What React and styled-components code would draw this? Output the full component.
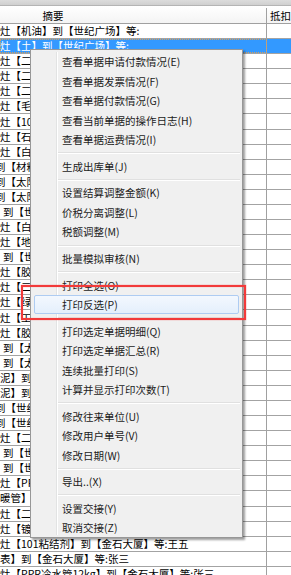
import React from 'react';
import styled, { createGlobalStyle, css } from 'styled-components';

const GlobalStyle = createGlobalStyle`
  html, body { margin: 0; padding: 0; background: #ffffff; }
  body { font-family: "Noto Sans CJK SC", "Noto Sans", sans-serif; }
`;

const Screen = styled.div`
  position: relative;
  width: 291px;
  height: 575px;
  overflow: hidden;
  background: #ffffff;
`;

const TopStrip = styled.div`
  height: 6px;
  box-sizing: border-box;
  background: linear-gradient(#dcdcdc, #cfcfcf);
  border-bottom: 1px solid #b4b4b4;
`;

const Table = styled.div`
  font-family: "Noto Sans CJK SC", sans-serif;
  font-size: 10.5px;
  color: #000000;
`;

const HeaderRow = styled.div`
  display: grid;
  grid-template-columns: 267px 1fr;
  height: 18px;
  box-sizing: border-box;
  border-bottom: 1px solid #a0a0a0;
  background: linear-gradient(#ffffff, #f4f4f4);
`;

const HeaderCell = styled.div`
  display: flex;
  align-items: center;
  justify-content: ${p => (p.$center ? 'center' : 'flex-start')};
  padding-left: ${p => (p.$center ? '0' : '3px')};
  padding-right: ${p => (p.$center ? '160px' : '0')};
  border-right: ${p => (p.$divider ? '1px solid #a0a0a0' : 'none')};
  margin-top: 2px;
  white-space: nowrap;
  overflow: hidden;
`;

const Row = styled.div`
  display: grid;
  grid-template-columns: 267px 1fr;
  height: 15.08px;
  box-sizing: border-box;
  border-bottom: 1px solid #a3a3a3;
  background: ${p => (p.$selected ? '#3399ff' : '#ffffff')};
  color: ${p => (p.$selected ? '#ffffff' : '#000000')};
`;

const Cell = styled.div`
  position: relative;
  display: flex;
  align-items: center;
  border-right: ${p => (p.$divider ? '1px solid #a0a0a0' : 'none')};
  white-space: nowrap;
  overflow: hidden;
  line-height: 14px;
  ${p => p.$focus && css`
    outline: 1px dotted #d9a05b;
    outline-offset: -1px;
  `}
`;

const CellText = styled.span`
  margin-left: ${p => p.$shift || 0}px;
`;

const Menu = styled.div`
  position: absolute;
  left: 30px;
  top: 49px;
  width: 213px;
  box-sizing: border-box;
  padding: 2px 2px 0 2px;
  background: #f0f0f0;
  border: 1px solid #979797;
  box-shadow: 2px 2px 2px rgba(0, 0, 0, 0.38);
  font-family: "Noto Sans CJK SC", sans-serif;
  font-size: 10.5px;
  color: #1b1b1b;

  &::before {
    content: '';
    position: absolute;
    top: 2px;
    bottom: 2px;
    left: 25px;
    width: 1px;
    background: #e2e3e3;
    box-shadow: 1px 0 0 #ffffff;
  }
`;

const Item = styled.div`
  position: relative;
  height: 19.46px;
  display: flex;
  align-items: center;
  box-sizing: border-box;
  padding-left: 29px;
  white-space: nowrap;
  ${p => p.$active && css`
    margin: 0 1px;
    padding-left: 27px;
    border: 1px solid #aeccf2;
    border-radius: 2px;
    background: linear-gradient(#f3f8fe, #e4effc);
  `}
`;

const Separator = styled.div`
  position: relative;
  height: 7.2px;
  display: flex;
  align-items: center;
  padding-left: 25px;

  &::after {
    content: '';
    flex: 1;
    height: 1px;
    background: #e0e0e0;
    box-shadow: 0 1px 0 #ffffff;
  }
`;

const Callout = styled.div`
  position: absolute;
  left: 21px;
  top: 285px;
  width: 225px;
  height: 34.5px;
  box-sizing: border-box;
  border: 2px solid #f23a3a;
  box-shadow: 0 0 1px rgba(242, 58, 58, 0.7), inset 0 0 1px rgba(242, 58, 58, 0.7);
  pointer-events: none;
`;

const rows = [
  { t: '灶【机油】到【世纪广场】等:' },
  { t: '灶【土】到【世纪广场】等:', selected: true },
  { t: '灶【二级钢筋】到【世纪广场】等:' },
  { t: '灶【二级钢筋】到【世纪广场】等:' },
  { t: '灶【二级钢筋】到【世纪广场】等:' },
  { t: '灶【毛毡】到【世纪广场】等:' },
  { t: '灶【107胶】到【世纪广场】等:' },
  { t: '灶【石硝】到【世纪广场】等:' },
  { t: '灶【白水泥】到【世纪广场】等:' },
  { t: '到【材料】到【世纪广场】等:', shift: -5 },
  { t: '到【太阳能】到【世纪广场】等:', shift: -5 },
  { t: '到【太阳能】到【世纪广场】等:', shift: -5 },
  { t: ' 到【世纪广场】等:', shift: 3 },
  { t: '灶【白水泥】到【世纪广场】等:' },
  { t: '灶【地暖管】到【世纪广场】等:' },
  { t: ' 到【世纪广场】等:', shift: 3 },
  { t: '灶【胶粘剂】到【世纪广场】等:' },
  { t: '灶【二级钢筋】到【世纪广场】等:' },
  { t: '灶【绿化带】到【世纪广场】等:' },
  { t: '灶【工字钢】到【世纪广场】等:' },
  { t: '灶【胶粘剂】到【世纪广场】等:' },
  { t: ' 到【太阳能】等:', shift: 3 },
  { t: ' 到【太阳能】等:', shift: 3 },
  { t: '泥】到【世纪广场】等:' },
  { t: '泥】到【世纪广场】等:' },
  { t: '到【世纪广场】等:', shift: -5 },
  { t: '到【世纪广场】等:', shift: -5 },
  { t: '灶【二级钢筋】到【世纪广场】等:' },
  { t: ' 到【世纪广场】等:', shift: 3 },
  { t: ' 到【世纪广场】等:', shift: 3 },
  { t: '灶【PPR管】到【世纪广场】等:' },
  { t: '暖管】到【世纪广场】等:' },
  { t: '灶【二级钢筋】到【世纪广场】等:' },
  { t: '灶【镀锌管】到【世纪广场】等:' },
  { t: '灶【101粘结剂】到【金石大厦】等:王五' },
  { t: '表】到【金石大厦】等:张三' },
  { t: '灶【PPR冷水管12kg】到【金石大厦】等:张三' },
];

const menu = [
  '查看单据申请付款情况(E)',
  '查看单据发票情况(F)',
  '查看单据付款情况(G)',
  '查看当前单据的操作日志(H)',
  '查看单据运费情况(I)',
  '-',
  '生成出库单(J)',
  '-',
  '设置结算调整金额(K)',
  '价税分离调整(L)',
  '税额调整(M)',
  '-',
  '批量模拟审核(N)',
  '-',
  '打印全选(O)',
  '打印反选(P)',
  '-',
  '打印选定单据明细(Q)',
  '打印选定单据汇总(R)',
  '连续批量打印(S)',
  '计算并显示打印次数(T)',
  '-',
  '修改往来单位(U)',
  '修改用户单号(V)',
  '修改日期(W)',
  '-',
  '导出..(X)',
  '-',
  '设置交接(Y)',
  '取消交接(Z)',
];

export default function App() {
  return (
    <>
      <GlobalStyle />
      <Screen>
        <TopStrip />
        <Table>
          <HeaderRow>
            <HeaderCell $divider $center>摘要</HeaderCell>
            <HeaderCell>抵扣</HeaderCell>
          </HeaderRow>
          {rows.map((r, i) => (
            <Row key={i} $selected={r.selected}>
              <Cell $divider $focus={r.selected}>
                <CellText $shift={r.shift}>{r.t}</CellText>
              </Cell>
              <Cell />
            </Row>
          ))}
        </Table>
        <Menu>
          {menu.map((m, i) =>
            m === '-' ? (
              <Separator key={i} />
            ) : (
              <Item key={i} $active={m === '打印反选(P)'}>{m}</Item>
            )
          )}
        </Menu>
        <Callout />
      </Screen>
    </>
  );
}
